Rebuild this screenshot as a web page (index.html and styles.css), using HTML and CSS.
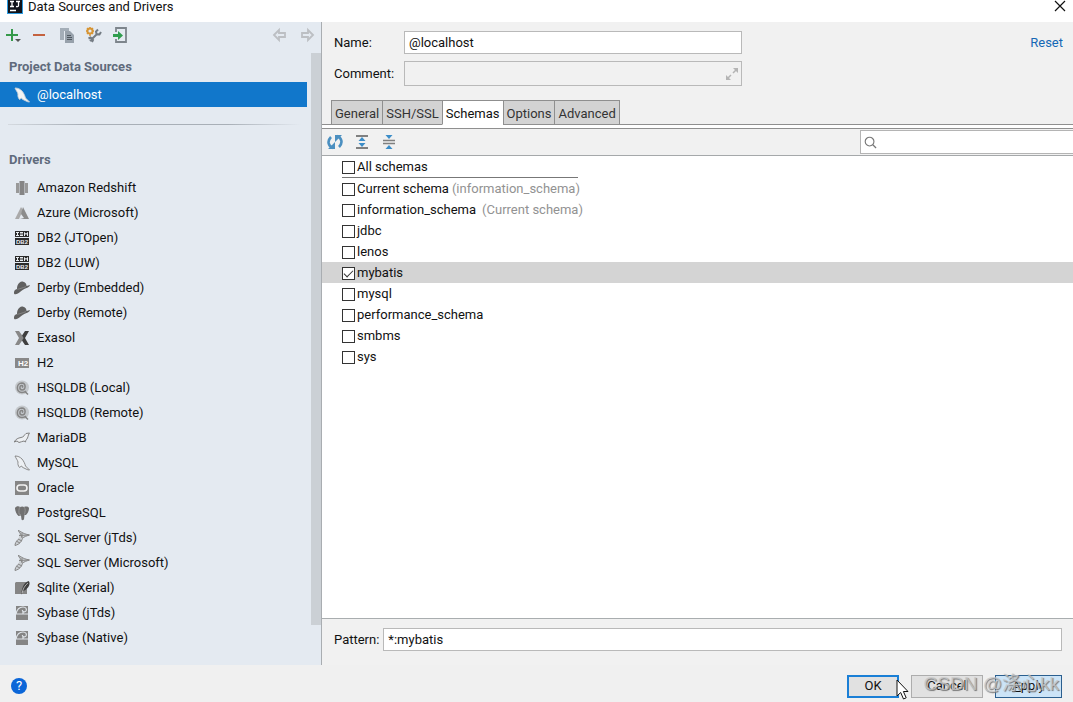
FILE: index.html
```html
<!DOCTYPE html>
<html lang="en">
<head>
<meta charset="utf-8">
<title>Data Sources and Drivers</title>
<link rel="stylesheet" href="styles.css">
</head>
<body>
<svg class="defs" aria-hidden="true">
  <symbol id="db2" viewBox="0 0 16 16"><path d="M1 1h14v6H1zM1 8h14v7H1z" fill="#2b2b2b"/><path d="M2 2.500h3M2 5.500h3M3.500 2v4M6 2.500h3M6 4h3M6 5.500h3M10.500 6V2.500L12 4.500l1.500-2V6" stroke="#e8ecf0" fill="none"/><text x="8" y="14" class="tiny" text-anchor="middle" fill="#e8ecf0">DB2</text></symbol>
  <symbol id="derby" viewBox="0 0 16 16"><path d="M0 13.500c-.3-2.500 1-4 3-4.500C3 5.500 4.500 2 8 1.500c1 0 1.500.6 2.500.8C12 3 12.300 4.500 12.600 6L16 5c-.5 2-2 2.600-4 3.200-2.500.8-4.500 2.300-6 3.800S1 15.500 0 13.500z" fill="#606060"/><path d="M3.300 9.300c2-.3 5-1.300 8.700-2.700" stroke="#8c8c8c" stroke-width=".8" fill="none"/></symbol>
  <symbol id="hsql" viewBox="0 0 16 16"><circle cx="8" cy="7.500" r="7" fill="#c4c8cc"/><path d="M8 7.500c1.200-.8.8-2-.3-2C5.500 5.500 5 9.800 8 10c4 0 4.300-6.800-.2-7C2.200 3 1.500 12.500 8 12.600c2 0 3-.6 4-1.600M11 11.500l3 3" stroke="#858585" stroke-width="1.500" fill="none"/></symbol>
  <symbol id="mssql" viewBox="0 0 16 16"><path d="M4 .5c3 .5 3.500 3 11.500 4.500-3 1-5.500 1.500-7 3.500C7.500 11 6.500 14 1 15.500c0-2 1.500-4 3-6 1.500-2 2-5 0-9z" fill="#ccd0d4"/><path d="M4 .5c3 .5 3.500 3 11.500 4.500-3 1-5.500 1.500-7 3.500C7.500 11 6.500 14 1 15.500c0-2 1-4 3-6M4 .5c2 1.500 3 4 4 7M8 3v5M5 5.500l10-.5M4 9l4 2M3 11.500l3 1.500" stroke="#858585" fill="none"/></symbol>
  <symbol id="sybase" viewBox="0 0 16 16"><path d="M2 1h12v14H2z" fill="#858585"/><path d="M2 9C3 4 6 2 9 2c3 0 4 2 3 4-1 1.500-4 1-3.500-1M2 9h7V6M9 9h5" stroke="#dfe4e9" stroke-width="1.200" fill="none"/></symbol>
  <symbol id="dolphin" viewBox="0 0 16 16"><path d="M1 1c3 0 5 1 7 3 2 2.500 3 5 3.500 7l4 4c-2 0-3-.8-4.500-1.500-1.500-.8-3-1-3.500-2.500L5.500 12.500C4 10.500 3.700 9 4 7 3.500 5 2 3.500 1 1z" stroke-width=".9"/></symbol>
</svg>

<header class="titlebar">
  <svg class="logo" viewBox="0 0 16 14"><path d="M0 0h16v14H0z" fill="#2d9be0"/><path d="M1 0h14v13H1z" fill="#10131a"/><path d="M3 1.500h4M5 1.500v5M3 6.500h4M9 1.500h4M11.500 1.500v4q0 1.500-2.500 1M3 10.500h6" stroke="#fff" stroke-width="1.300" fill="none"/></svg>
  <h1>Data Sources and Drivers</h1>
  <button class="plain close" aria-label="Close"><svg viewBox="0 0 12 12" width="12" height="12"><path d="M1 1l10 10M11 1L1 11" stroke="#111" stroke-width="1.200"/></svg></button>
</header>

<div class="body">
  <aside class="sidebar">
    <div class="tools">
      <button class="plain" aria-label="Add"><svg class="icon" viewBox="0 0 16 16"><path d="M0 8h12M6 2v12" stroke="#35994a" stroke-width="2"/><path d="M9 12h6l-3 3z" fill="#555"/></svg></button>
      <button class="plain" aria-label="Remove"><svg class="icon" viewBox="0 0 16 16"><path d="M1 8h12" stroke="#c4623f" stroke-width="2"/></svg></button>
      <button class="plain" aria-label="Duplicate"><svg class="icon" viewBox="0 0 16 16"><path d="M1 1h9v3H5v9H1z" fill="#a4aeb8"/><path d="M6 4h5l4 4v8H6z" fill="#97a1ab"/><path d="M8 8.500h4M8 10.500h5M8 12.500h5" stroke="#4f5860"/></svg></button>
      <button class="plain" aria-label="Settings"><svg class="icon" viewBox="0 0 16 16"><circle cx="4" cy="4" r="2.600" stroke="#d79534" stroke-width="2" fill="none"/><path d="M4 0v1M4 7v2M0 4h1M7 4h1M1 1l1 1M6 6l1 1M7 1L6 2M1 7l1-1" stroke="#d79534" stroke-width="1.500"/><path d="M4 14l7-7M12 2.500l-2 2 .5 2.500 3 .5L15 5M2.500 11.500l2-1L7 13l-1 2" stroke="#747c84" stroke-width="2" fill="none"/></svg></button>
      <button class="plain" aria-label="Import"><svg class="icon" viewBox="0 0 16 16"><path d="M3 5V1h10v14H3v-3" stroke="#7d858c" stroke-width="1.800" fill="none"/><path d="M0 7h5V4l5 4.500L5 13v-3H0z" fill="#2f9d4e"/></svg></button>
      <span class="grow"></span>
      <button class="plain" aria-label="Back"><svg class="icon" viewBox="0 0 16 16"><path d="M2 8l5-5v3h6v4H7v3z" stroke="#bcbfc3" stroke-width="1.800" fill="none"/></svg></button>
      <button class="plain" aria-label="Forward"><svg class="icon" viewBox="0 0 16 16"><path d="M14 8L9 3v3H3v4h6v3z" stroke="#bcbfc3" stroke-width="1.800" fill="none"/></svg></button>
    </div>
    <div class="scroller">
      <div class="sources">
        <h2>Project Data Sources</h2>
        <ul class="items"><li class="selected"><svg class="icon" viewBox="0 0 16 16" fill="#f4f4f4" stroke="#c9d1d8"><use href="#dolphin"/></svg>@localhost</li></ul>
        <hr>
        <h2 class="drivers">Drivers</h2>
        <ul class="items">
          <li><svg class="icon" viewBox="0 0 16 16"><path d="M2 3h3v10H2zM11 3h3v10h-3z" fill="#999"/><path d="M5.500 1h5v14h-5z" fill="#858585"/></svg>Amazon Redshift</li>
          <li><svg class="icon" viewBox="0 0 16 16"><path d="M7 2L1 14h4L9 5z" fill="#aaa"/><path d="M9 2l6 12H6l4-1-3-4z" fill="#8c8c8c"/></svg>Azure (Microsoft)</li>
          <li><svg class="icon"><use href="#db2"/></svg>DB2 (JTOpen)</li>
          <li><svg class="icon"><use href="#db2"/></svg>DB2 (LUW)</li>
          <li><svg class="icon"><use href="#derby"/></svg>Derby (Embedded)</li>
          <li><svg class="icon"><use href="#derby"/></svg>Derby (Remote)</li>
          <li><svg class="icon" viewBox="0 0 16 16"><path d="M1 1h4l5 7-5 7H1l4-7z" fill="#888"/><path d="M15 1h-4L8 5.500 9.500 8 8 10.500 11 15h4l-4-7z" fill="#3f3f3f"/></svg>Exasol</li>
          <li><svg class="icon" viewBox="0 0 16 16"><path d="M1 3h14v10H1z" fill="#888"/><text x="9" y="11" class="small" text-anchor="middle" fill="#fff">H2</text></svg>H2</li>
          <li><svg class="icon"><use href="#hsql"/></svg>HSQLDB (Local)</li>
          <li><svg class="icon"><use href="#hsql"/></svg>HSQLDB (Remote)</li>
          <li><svg class="icon" viewBox="0 0 16 16"><path d="M0 12c2-3 4-4 7-4.500 3-.3 3.500-3 5-4L15.500 3c-1 1-1.200 3-2 5-.6 1.500-2 2-2 4L10 11c-2 .2-3 1.200-5 1.500L3 11z" fill="#edf0f3" stroke="#808080"/></svg>MariaDB</li>
          <li><svg class="icon" viewBox="0 0 16 16" fill="#edf0f3" stroke="#808080"><use href="#dolphin"/></svg>MySQL</li>
          <li><svg class="icon" viewBox="0 0 16 16"><path d="M1 1h14v14H1z" fill="#858585"/><rect x="3" y="5" width="10" height="6" rx="3" stroke="#f3f3f3" stroke-width="1.600" fill="none"/></svg>Oracle</li>
          <li><svg class="icon" viewBox="0 0 16 16"><path d="M1 3c1-2 4-2 5-1 1.500-.8 3-.8 4 0 2-1 5-.5 5 1.500 0 2.500-1.500 5-3 6.500h-1.500L10 14c-.5 1.500-2 1.500-2.500.5L7 10.500 4.500 11C2.500 9.500 1 6 1 3z" fill="#707070"/><path d="M6 2C4.500 4 5 7 5 9l2 1M10 2c2 2 1 5 .5 7.500" stroke="#a0a0a0" stroke-width=".7" fill="none"/></svg>PostgreSQL</li>
          <li><svg class="icon"><use href="#mssql"/></svg>SQL Server (jTds)</li>
          <li><svg class="icon"><use href="#mssql"/></svg>SQL Server (Microsoft)</li>
          <li><svg class="icon" viewBox="0 0 16 16"><path d="M2 2h11v12H1V3z" fill="#858585"/><path d="M7 15C8 9 9 3 14.500 1c1.500 1 1.500 4-.5 6.500C12 10 10 11 8.500 11z" fill="#3f3f3f"/><path d="M8 13c1-4 3-8 6-10" stroke="#c6c6c6" stroke-width=".8" fill="none"/></svg>Sqlite (Xerial)</li>
          <li><svg class="icon"><use href="#sybase"/></svg>Sybase (jTds)</li>
          <li><svg class="icon"><use href="#sybase"/></svg>Sybase (Native)</li>
        </ul>
      </div>
      <div class="thumb"></div>
    </div>
  </aside>

  <main class="main">
    <form class="form">
      <label for="name">Name:</label>
      <input class="field" id="name" type="text" value="@localhost">
      <a class="reset" href="#">Reset</a>
      <label for="comment">Comment:</label>
      <div class="field comment">
        <input id="comment" type="text">
        <svg viewBox="0 0 14 14" width="14" height="14"><path d="M8 1h5v5zM1 8v5h5z" fill="#b4b4b4"/><path d="M8 6l4-4M2 12l4-4" stroke="#b4b4b4" stroke-width="1.500"/></svg>
      </div>
    </form>
    <div class="tabs" role="tablist">
      <button role="tab">General</button><button role="tab">SSH/SSL</button><button role="tab" class="active" aria-selected="true">Schemas</button><button role="tab">Options</button><button role="tab">Advanced</button>
    </div>
    <div class="schema-tools">
      <button class="plain" aria-label="Refresh"><svg class="icon" viewBox="0 0 16 16"><path d="M6 14C1 12 0 7 4 3M10 2c5 2 6 7 2 11" stroke="#4b8fc0" stroke-width="2.600" fill="none"/><path d="M8 15H1L8 8zM8 1h7L8 8z" fill="#4b8fc0"/></svg></button>
      <button class="plain" aria-label="Expand all"><svg class="icon" viewBox="0 0 16 16"><path d="M2 2h12M2 14h12" stroke="#808080" stroke-width="2"/><path d="M8 3l3.500 4h-7zM8 13l3.500-4h-7z" fill="#3c8dc8"/></svg></button>
      <button class="plain" aria-label="Collapse all"><svg class="icon" viewBox="0 0 16 16"><path d="M2 6.500h12M2 9.500h12" stroke="#808080" stroke-width="1.600"/><path d="M4.500 1h7L8 5zM4.500 15h7L8 11z" fill="#3c8dc8"/></svg></button>
      <span class="grow"></span>
      <div class="search">
        <svg viewBox="0 0 14 14" width="13" height="13"><circle cx="6" cy="6" r="4.700" stroke="#777" stroke-width="1.200" fill="none"/><path d="M9.500 9.500L13 13" stroke="#777" stroke-width="1.400"/></svg>
        <input type="text" aria-label="Search schemas">
      </div>
    </div>
    <div class="schemas">
      <label class="all"><input type="checkbox">All schemas</label>
      <hr class="rule">
      <label><input type="checkbox">Current schema <span class="hint">(information_schema)</span></label>
      <label><input type="checkbox">information_schema <span class="hint far">(Current schema)</span></label>
      <label><input type="checkbox">jdbc</label>
      <label><input type="checkbox">lenos</label>
      <label class="current"><input type="checkbox" checked>mybatis</label>
      <label><input type="checkbox">mysql</label>
      <label><input type="checkbox">performance_schema</label>
      <label><input type="checkbox">smbms</label>
      <label><input type="checkbox">sys</label>
    </div>
    <div class="pattern">
      <label for="pattern">Pattern:</label>
      <input class="field" id="pattern" type="text" value="*:mybatis">
    </div>
  </main>
</div>

<footer class="footer">
  <button class="help" aria-label="Help">?</button>
  <span class="grow"></span>
  <button class="btn ok">OK</button>
  <button class="btn cancel">Cancel</button>
  <button class="btn apply"><u>A</u>pply</button>
  <span class="watermark">CSDN @涤心kk</span>
  <svg class="cursor" viewBox="0 0 13 21" width="13" height="21"><path d="M1 1v16l3.700-3.500L7.500 20l2.700-1.200L7.400 12.500H12z" fill="#fff" stroke="#111"/></svg>
</footer>
</body>
</html>
```

FILE: styles.css
```css
* { box-sizing: border-box; }

body {
  margin: 0;
  min-height: 100vh;
  display: flex;
  flex-direction: column;
  background: #f0f0f0;
  color: #111;
  font: 13px/20px Roboto, "Noto Sans CJK SC", sans-serif;
}

h1, h2, ul { margin: 0; padding: 0; font-size: 13px; }
button, input { font: inherit; color: inherit; }
input { min-width: 0; outline: 0; }
.defs { position: absolute; width: 0; height: 0; }
.icon { width: 16px; height: 16px; flex: none; display: block; }
.grow { flex: 1; }
.tiny { font: bold 6px "Liberation Sans", sans-serif; }
.small { font: bold 8px "Liberation Sans", sans-serif; }
.plain { padding: 0; border: 0; background: none; display: flex; }

.titlebar {
  height: 22px;
  padding: 0 7px;
  display: flex;
  align-items: flex-start;
  background: #fff;
}
.titlebar h1 { flex: 1; font-weight: 400; line-height: 14px; margin-left: 5px; }
.logo { width: 16px; height: 14px; }

.body { flex: 1; display: flex; }

.sidebar {
  flex: 0 0 322px;
  display: flex;
  flex-direction: column;
  background: #e4eaf1;
  border-right: 1px solid #a9adb1;
}
.tools { display: flex; gap: 11px; padding: 5px 6px 10px; }
.tools .plain:first-child { margin-right: -1px; }
.scroller { flex: 1; display: flex; }
.sources { flex: 1; }
.thumb { width: 10px; margin: 0 0 40px 4px; background: #cbd0d5; }
h2 { color: #5f6b7c; line-height: 20px; padding: 4px 9px 5px; }
.drivers { padding: 25px 9px 5px; }
.items { list-style: none; }
.items li { height: 25px; padding-left: 14px; display: flex; align-items: center; gap: 7px; }
.items .selected { background: #1177cb; color: #fff; }
.sources hr {
  height: 1px;
  margin: 17px 6px 0 8px;
  border: 0;
  background: linear-gradient(to right, #d5dae0, #a8afb7 25%, #a8afb7 75%, #e4eaf1);
}

.main { flex: 1; min-width: 0; display: flex; flex-direction: column; background: #f1f1f1; }
.form {
  display: grid;
  grid-template-columns: 70px 338px 1fr;
  grid-template-rows: 23px 25px;
  row-gap: 7px;
  align-items: center;
  padding: 9px 10px 14px 12px;
}
.field { height: 23px; padding: 0 4px; border: 1px solid #b9b9b9; border-radius: 0; background: #fff; }
.reset { justify-self: end; color: #1568b5; text-decoration: none; }
.comment { height: 25px; display: flex; align-items: center; background: #f1f1f1; padding-right: 2px; }
.comment input { flex: 1; border: 0; background: none; }

.tabs { display: flex; padding-left: 9px; height: 29px; border-bottom: 1px solid #8f8f8f; background: linear-gradient(#f1f1f1 24px, #8f8f8f 24px, #8f8f8f 25px, #fff 25px); }
.tabs button {
  height: 25px;
  padding: 3px 3px 0;
  border: 1px solid #8f8f8f;
  border-right: 0;
  background: #d3d3d3;
  color: #333;
}
.tabs button:last-child { border-right: 1px solid #8f8f8f; }
.tabs .active { background: #fff; border-bottom-color: #fff; color: #111; }

.schema-tools { height: 27px; display: flex; align-items: center; gap: 11px; padding-left: 5px; border-bottom: 1px solid #a5a8aa; }
.search { width: 213px; height: 24px; display: flex; align-items: center; padding-left: 3px; border: 1px solid #b4b4b4; border-right: 0; background: #fff; }
.search input { flex: 1; border: 0; background: none; }

.schemas { flex: 1; background: #fff; }
.schemas label { height: 21px; display: flex; align-items: center; padding-left: 20px; }
.schemas input {
  appearance: none;
  flex: none;
  width: 13px;
  height: 13px;
  margin: 2px 2px 0 0;
  border: 1px solid #333;
  background: #fff;
  display: grid;
  place-items: center;
}
.schemas input:checked::after {
  content: "";
  width: 8px;
  height: 4px;
  margin-bottom: 2px;
  border: solid #333;
  border-width: 0 0 1px 1px;
  transform: rotate(-45deg);
}
.schemas .current { background: #d4d4d4; }
.rule { width: 236px; height: 1px; margin: 0 0 0 20px; border: 0; background: #777; }
.hint { color: #929292; margin-left: 3px; }
.far { margin-left: 6px; }

.pattern { display: flex; align-items: center; gap: 4px; padding: 9px 11px 14px 12px; border-top: 1px solid #a9adaf; }
.pattern .field { flex: 1; }

.footer { position: relative; display: flex; align-items: center; gap: 12px; height: 37px; padding: 5px 11px 0; }
.help { width: 16px; height: 16px; padding: 0; border: 0; border-radius: 50%; background: #0b66d8; color: #fff; line-height: 16px; }
.btn { height: 23px; padding: 0; border: 1px solid #adadad; background: #e1e1e1; line-height: 20px; }
.ok { width: 52px; border: 2px solid #1a7fd6; line-height: 18px; }
.cancel { width: 72px; }
.apply { width: 67px; border-color: #2b5f8f; background: #cce4f7; }
.watermark {
  position: absolute;
  right: 14px;
  top: 5px;
  color: rgba(200, 200, 200, 0.8);
  font: 19px/28px "Liberation Sans", "Noto Sans CJK SC", sans-serif;
  text-shadow: 1px 1px 1px #777;
}
.cursor { position: absolute; right: 164px; top: 14px; }
```
